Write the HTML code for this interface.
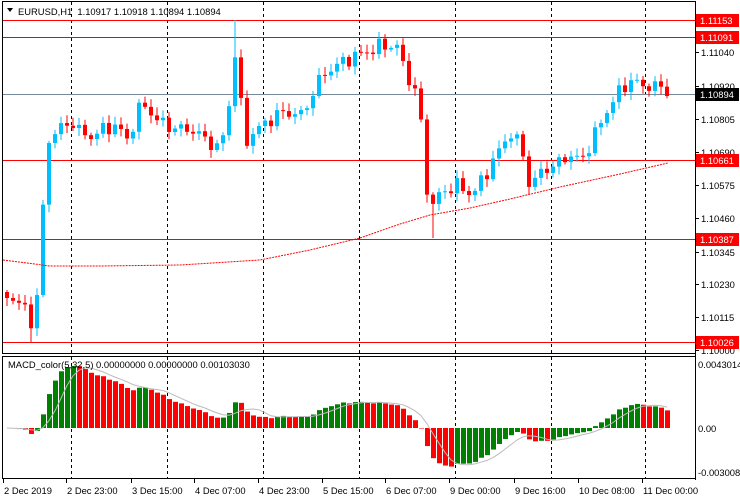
<!DOCTYPE html>
<html><head><meta charset="utf-8"><style>
html,body{margin:0;padding:0;background:#fff;width:740px;height:500px;overflow:hidden;font-family:"Liberation Sans",sans-serif}
svg text{font-family:"Liberation Sans",sans-serif;font-size:9.4px}
</style></head><body>
<svg id="s" width="740" height="500" xmlns="http://www.w3.org/2000/svg"></svg>
<script>
var s=document.getElementById('s'),h='';
function L(x1,y1,x2,y2,c,w,d){h+='<line x1="'+x1+'" y1="'+y1+'" x2="'+x2+'" y2="'+y2+'" stroke="'+c+'" stroke-width="'+(w||1)+'"'+(d?' stroke-dasharray="'+d+'"':'')+'/>';}
function R(x,y,w,hh,c){h+='<rect x="'+x+'" y="'+y+'" width="'+w+'" height="'+hh+'" fill="'+c+'"/>';}
function T(x,y,t,c,a){h+='<text x="'+x+'" y="'+y+'" fill="'+(c||'#000')+'"'+(a?' text-anchor="'+a+'"':'')+'>'+t+'</text>';}
L(2,1.5,695,1.5,'#000');L(2.5,1,2.5,353,'#000');L(2,353.5,695,353.5,'#000');L(695.5,1,695.5,480,'#000');
L(2,356.5,695,356.5,'#000');L(2.5,356,2.5,479,'#000');L(2,478.5,695,478.5,'#000');
var vx=[71,167,263,359,455,551,645];
vx.forEach(function(x){L(x+.5,2,x+.5,353,'#000',1,'3,3');L(x+.5,357,x+.5,478,'#000',1,'3,3');});
L(3,94.5,695,94.5,'#778899');
[20,37,160,239,342].forEach(function(y){L(3,y+.5,695,y+.5,'#f00');});
var K=[[5,295],[20,305],[28,318],[32,330],[38,265],[44,150],[50,132],[60,128],[70,122],[85,138],[100,130],[115,125],[125,140],[140,102],[155,120],[170,128],[190,130],[205,140],[215,148],[225,128],[232,45],[238,100],[245,140],[260,125],[280,112],[300,115],[310,95],[320,75],[340,62],[355,55],[370,50],[380,45],[395,47],[405,75],[415,95],[420,130],[425,190],[430,205],[440,192],[455,185],[470,195],[480,180],[490,163],[500,145],[510,132],[520,150],[528,188],[540,170],[555,165],[565,155],[580,160],[590,140],[600,120],[610,102],[620,88],[630,80],[640,86],[655,86],[668,92]];
function ip(x){for(var i=0;i<K.length-1;i++){if(x<=K[i+1][0]){var t=(x-K[i][0])/(K[i+1][0]-K[i][0]);return K[i][1]+t*(K[i+1][1]-K[i][1]);}}return K[K.length-1][1];}
var N=111,cl=[],prev=292;
for(var i=0;i<N;i++){
 var x=5+i*6,c=ip(x)+5*Math.sin(i*1.9)+3*Math.cos(i*3.3);
 var o=prev;var hi=Math.min(o,c)-2-Math.abs(6*Math.sin(i*2.7));var lo=Math.max(o,c)+2+Math.abs(6*Math.cos(i*1.3));
 if(x>=230&&x<236)hi=20; if(x>=426&&x<432)lo=238; if(x>=28&&x<34)lo=342;
 var col=c<o?'#00bfff':'#f00';
 L(x+2,hi,x+2,lo,col);
 var t=Math.min(o,c),b=Math.max(Math.abs(o-c),1);
 R(x,t,4,b,col);
 prev=c;cl.push(-c);
}
var M=[[3,260],[50,266],[100,266],[180,265],[260,260],[310,250],[360,238],[400,224],[430,215],[470,208],[510,199],[560,187],[620,174],[668,163]];
var p='';M.forEach(function(m,j){p+=(j?'L':'M')+m[0]+','+m[1];});
h+='<path d="'+p+'" fill="none" stroke="#f00" stroke-width="1" stroke-dasharray="2,1"/>';
var ef=cl[0],es=cl[0],hs=[];
for(var i=0;i<N;i++){ef+= (cl[i]-ef)*2/6;es+=(cl[i]-es)*2/33;hs.push(ef-es);}
var mx=Math.max.apply(null,hs),mn=Math.min.apply(null,hs);
var sc=Math.min(62/mx,46/(-mn)),z=428,sp='';
for(var i=0;i<N;i++){var x=5+i*6,v=hs[i]*sc;var col=(i>0&&hs[i]>hs[i-1])?'#008000':'#f00';
 if(v>=0)R(x,z-v,5,v,col);else R(x,z,5,-v,col);
 var sg=0,n=0;for(var k=Math.max(0,i-4);k<=i;k++){sg+=hs[k];n++;}sg=sg/n*sc;sp+=(i?'L':'M')+(x+2)+','+(z-sg).toFixed(1);}
h+='<path d="'+sp+'" fill="none" stroke="#bbb" stroke-width="1"/>';
h+='<path d="M7,8 L13,8 L10,12 Z" fill="#000"/>';
T(18,15,'EURUSD,H1&#160;&#160;1.10917 1.10918 1.10894 1.10894');
T(8,368,'MACD_color(5,32,5) 0.00000000 0.00000000 0.00103030');
[[52,'1.11040'],[86,'1.10920'],[119,'1.10805'],[152,'1.10690'],[185,'1.10575'],[218,'1.10460'],[252,'1.10345'],[284,'1.10230'],[317,'1.10115'],[350,'1.10000']].forEach(function(a){L(696,a[0]+.5,699,a[0]+.5,'#000');T(701,a[0]+4,a[1]);});
[[20,'1.11153','#f00'],[37,'1.11091','#f00'],[94,'1.10894','#000'],[160,'1.10661','#f00'],[239,'1.10387','#f00'],[342,'1.10026','#f00']].forEach(function(a){R(696,a[0]-6,43,13,a[2]);T(700,a[0]+4,a[1],'#fff');});
T(698,368,'0.0043014');T(698,432,'0.00');T(698,476,'-0.003008');
[[3,'2 Dec 2019'],[66,'2 Dec 23:00'],[131,'3 Dec 15:00'],[194,'4 Dec 07:00'],[258,'4 Dec 23:00'],[322,'5 Dec 15:00'],[385,'6 Dec 07:00'],[449,'9 Dec 00:00'],[514,'9 Dec 16:00'],[578,'10 Dec 08:00'],[642,'11 Dec 00:00']].forEach(function(a){L(a[0]+.5,479,a[0]+.5,483,'#000');T(a[0]+1,494,a[1]);});
s.innerHTML=h;
</script>
</body></html>
